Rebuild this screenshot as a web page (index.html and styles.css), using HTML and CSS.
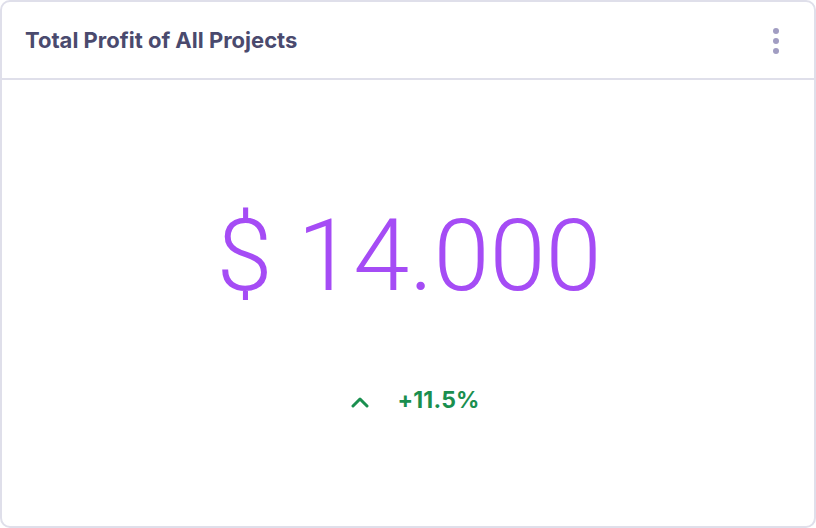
FILE: index.html
```html
<!DOCTYPE html>
<html>
<head>
<meta charset="utf-8">
<link rel="stylesheet" href="styles.css">
</head>
<body>
<div class="card">
  <div class="card-header">
    <h2 class="title">Total Profit of All Projects</h2>
    <button class="menu" aria-label="More">
      <svg width="8" height="28" viewBox="0 0 8 28"><circle cx="4" cy="4" r="3" fill="#a19dc2"/><circle cx="4" cy="14" r="3" fill="#a19dc2"/><circle cx="4" cy="24" r="3" fill="#a19dc2"/></svg>
    </button>
  </div>
  <div class="card-body">
    <div class="amount">$ 14.000</div>
    <div class="change">
      <svg class="chev" width="20" height="12" viewBox="0 0 20 12"><path d="M3 10 L10 3 L17 10" fill="none" stroke="#1a8f4f" stroke-width="3" stroke-linecap="round" stroke-linejoin="round"/></svg>
      <span class="pct">+11.5%</span>
    </div>
  </div>
</div>
</body>
</html>
```
FILE: styles.css
```css
* { box-sizing: border-box; }
html, body { margin: 0; padding: 0; background: #fff; }
body { width: 816px; height: 528px; font-family: Inter, "Noto Sans", sans-serif; }
.card {
  width: 816px; height: 528px;
  border: 2px solid #dfdfea;
  border-radius: 10px;
  background: #fff;
  display: flex; flex-direction: column;
}
.card-header {
  height: 78px;
  border-bottom: 2px solid #dfdfea;
  display: flex; align-items: center; justify-content: space-between;
  padding: 0 34px 0 23px;
}
.title {
  margin: 0;
  font-size: 22px; font-weight: 700;
  color: #4a4a6e;
  letter-spacing: 0;
}
.menu { border: 0; background: none; padding: 0; display: flex; margin-top: 1px; }
.card-body {
  flex: 1;
  display: flex; flex-direction: column; align-items: center;
}
.amount {
  margin-top: 116px;
  font-family: Roboto, sans-serif;
  font-weight: 300;
  font-size: 101px;
  line-height: 120px;
  color: #a54cf5;
  padding-left: 2px;
}
.change {
  margin-top: 70px;
  display: flex; align-items: center; gap: 27px;
  margin-left: 14px;
}
.chev { display: block; margin-top: 4px; }
.pct { font-size: 23px; font-weight: 700; color: #1a8f4f; letter-spacing: 0.2px; }
```
